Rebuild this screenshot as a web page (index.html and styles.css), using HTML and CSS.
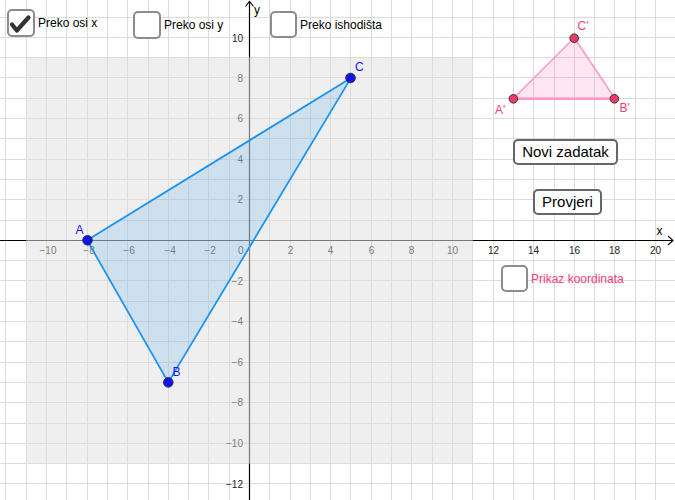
FILE: index.html
```html
<!DOCTYPE html>
<html lang="hr">
<head>
<meta charset="utf-8">
<title>Zrcaljenje trokuta</title>
<link rel="stylesheet" href="styles.css">
</head>
<body>
<div class="applet">
  <svg class="board" width="675" height="500" viewBox="0 0 675 500" xmlns="http://www.w3.org/2000/svg">
    <rect class="bg" x="0" y="0" width="675" height="500"/>
    <rect class="zone" x="26.5" y="57.5" width="446" height="406"/>
    <path class="grid" d="M5.5 0V500M26.5 0V500M46.5 0V500M66.5 0V500M87.5 0V500M107.5 0V500M127.5 0V500M148.5 0V500M168.5 0V500M188.5 0V500M208.5 0V500M229.5 0V500M269.5 0V500M290.5 0V500M310.5 0V500M330.5 0V500M350.5 0V500M371.5 0V500M391.5 0V500M411.5 0V500M432.5 0V500M452.5 0V500M472.5 0V500M493.5 0V500M513.5 0V500M533.5 0V500M554.5 0V500M574.5 0V500M594.5 0V500M614.5 0V500M635.5 0V500M655.5 0V500"/>
    <path class="grid" d="M0 17.5H675M0 37.5H675M0 57.5H675M0 77.5H675M0 98.5H675M0 118.5H675M0 138.5H675M0 159.5H675M0 179.5H675M0 199.5H675M0 220.5H675M0 260.5H675M0 280.5H675M0 301.5H675M0 321.5H675M0 341.5H675M0 362.5H675M0 382.5H675M0 402.5H675M0 423.5H675M0 443.5H675M0 463.5H675M0 483.5H675"/>

    <!-- axes -->
    <path class="axis" d="M0 240.5H26.5M472.5 240.5H673M249.5 1.5V57.5M249.5 463.5V500"/>
    <path class="axis-dim" d="M26.5 240.5H472.5M249.5 57.5V463.5"/>
    <path class="arrow" d="M245.5 6.5L249.5 1.5L253.5 6.5M668 236L673 240.5L668 245"/>
    <text class="axis-name" x="254" y="14">y</text>
    <text class="axis-name" x="656.5" y="235">x</text>

    <!-- x tick labels -->
    <g class="tick tick-dim mid">
      <text x="48" y="253.5">−10</text>
      <text x="89" y="253.5">−8</text>
      <text x="129" y="253.5">−6</text>
      <text x="170" y="253.5">−4</text>
      <text x="210" y="253.5">−2</text>
      <text x="290.5" y="253.5">2</text>
      <text x="330.5" y="253.5">4</text>
      <text x="371.5" y="253.5">6</text>
      <text x="411.5" y="253.5">8</text>
      <text x="452.5" y="253.5">10</text>
    </g>
    <g class="tick mid">
      <text x="493.5" y="253.5">12</text>
      <text x="533.5" y="253.5">14</text>
      <text x="574.5" y="253.5">16</text>
      <text x="614.5" y="253.5">18</text>
      <text x="655.5" y="253.5">20</text>
    </g>
    <g class="tick tick-dim end">
      <text x="243.5" y="253.5">0</text>
      <text x="243" y="81.5">8</text>
      <text x="243" y="122">6</text>
      <text x="243" y="163">4</text>
      <text x="243" y="203">2</text>
      <text x="243" y="284.5">−2</text>
      <text x="243" y="325">−4</text>
      <text x="243" y="366">−6</text>
      <text x="243" y="406">−8</text>
      <text x="243" y="447">−10</text>
    </g>
    <g class="tick end">
      <text x="243" y="41.5">10</text>
      <text x="243" y="487.5">−12</text>
    </g>

    <!-- triangle ABC -->
    <polygon class="tri-blue" points="87.1,240.3 168.3,382.4 351,77.9"/>
    <circle class="pt-blue" cx="87.5" cy="240.3" r="4.8"/>
    <circle class="pt-blue" cx="168.3" cy="382.4" r="4.8"/>
    <circle class="pt-blue" cx="350.5" cy="78" r="4.8"/>
    <text class="lbl-blue" x="75.5" y="233.5">A</text>
    <text class="lbl-blue" x="172.5" y="375.5">B</text>
    <text class="lbl-blue" x="355" y="71">C</text>

    <!-- triangle A'B'C' -->
    <polygon class="tri-pink" points="513.4,98.5 614.9,98.5 574.3,37.8"/>
    <line class="edge-pink" x1="513.4" y1="98.8" x2="614.9" y2="98.8"/>
    <circle class="pt-pink" cx="513.4" cy="98.8" r="4.3"/>
    <circle class="pt-pink" cx="614.4" cy="98.8" r="4.3"/>
    <circle class="pt-pink" cx="574.2" cy="38.2" r="4.3"/>
    <text class="lbl-pink" x="495" y="113.5">A'</text>
    <text class="lbl-pink" x="619.5" y="112">B'</text>
    <text class="lbl-pink" x="577.5" y="30">C'</text>
  </svg>

  <label class="cb cb-x">
    <span class="box">
      <svg class="check" width="24" height="24" viewBox="0 0 24 24"><path d="M3 13.5L7.8 19.5L19.5 6.5"/></svg>
    </span>
    <span class="cb-text">Preko osi x</span>
  </label>
  <label class="cb cb-y">
    <span class="box"></span>
    <span class="cb-text">Preko osi y</span>
  </label>
  <label class="cb cb-o">
    <span class="box"></span>
    <span class="cb-text">Preko ishodišta</span>
  </label>

  <button class="btn btn-novi" type="button">Novi zadatak</button>
  <button class="btn btn-provjeri" type="button">Provjeri</button>

  <label class="cb cb-k">
    <span class="box"></span>
    <span class="cb-text pink">Prikaz koordinata</span>
  </label>
</div>
</body>
</html>
```

FILE: styles.css
```css
html, body {
  margin: 0;
  padding: 0;
  background: #ffffff;
  overflow: hidden;
}

.applet {
  position: relative;
  width: 675px;
  height: 500px;
  font-family: "Liberation Sans", Arial, sans-serif;
  color: #000;
}

.board {
  display: block;
}

.bg { fill: #ffffff; }
.zone { fill: #efefef; }

.grid {
  stroke: #dcdcdc;
  stroke-width: 1;
  fill: none;
}

.axis {
  stroke: #000;
  stroke-width: 1.2;
  fill: none;
}
.axis-dim {
  stroke: #7a7a7a;
  stroke-width: 1.2;
  fill: none;
}
.arrow {
  stroke: #000;
  stroke-width: 1.1;
  fill: none;
}

.axis-name {
  font-family: "Liberation Sans", Arial, sans-serif;
  font-size: 12px;
  fill: #000;
}

.tick text {
  font-family: "Liberation Sans", Arial, sans-serif;
  font-size: 10px;
  fill: #222;
}
.tick-dim text { fill: #7c7c7c; }
.mid text { text-anchor: middle; }
.end text { text-anchor: end; }

.tri-blue {
  fill: rgba(20, 140, 235, 0.15);
  stroke: #1b93f0;
  stroke-width: 1.8;
  stroke-linejoin: round;
}
.pt-blue {
  fill: #1010ff;
  stroke: #333;
  stroke-width: 1;
}
.lbl-blue {
  font-family: "Liberation Sans", Arial, sans-serif;
  font-size: 12px;
  fill: #1414ff;
}

.tri-pink {
  fill: rgba(255, 60, 150, 0.13);
  stroke: #ff9ac6;
  stroke-width: 1.6;
  stroke-linejoin: round;
}
.edge-pink {
  stroke: #ff9ac6;
  stroke-width: 2.4;
}
.pt-pink {
  fill: #f23a6a;
  stroke: #333;
  stroke-width: 1;
}
.lbl-pink {
  font-family: "Liberation Sans", Arial, sans-serif;
  font-size: 12px;
  fill: #f2407a;
}

/* checkboxes overlaying the board */
.cb {
  position: absolute;
  display: flex;
  align-items: center;
  gap: 3px;
  font-size: 12px;
  cursor: pointer;
}
.cb-x { left: 7px; top: 9px; }
.cb-y { left: 133px; top: 11px; }
.cb-o { left: 270px; top: 11px; }
.cb-k { left: 501px; top: 265px; }

.box {
  width: 27px;
  height: 27px;
  box-sizing: border-box;
  border: 2px solid #8c8c8c;
  border-radius: 5px;
  background: #fff;
  display: flex;
  align-items: center;
  justify-content: center;
}
.cb-x .box { width: 28px; height: 28px; }
.cb-y .box { width: 28px; height: 28px; }

.check path {
  fill: none;
  stroke: #333;
  stroke-width: 4.2;
  stroke-linecap: round;
  stroke-linejoin: round;
}

.cb-text { color: #000; white-space: nowrap; }
.cb-text.pink { color: #f2407a; }

.btn {
  position: absolute;
  height: 26px;
  box-sizing: border-box;
  border: 2px solid #666;
  border-radius: 5px;
  background: #fff;
  font-family: "Liberation Sans", Arial, sans-serif;
  font-size: 15px;
  color: #000;
  padding: 0;
  line-height: 22px;
  text-align: center;
}
.btn-novi { left: 513px; top: 139px; width: 105px; }
.btn-provjeri { left: 533px; top: 189px; width: 69px; }
```
